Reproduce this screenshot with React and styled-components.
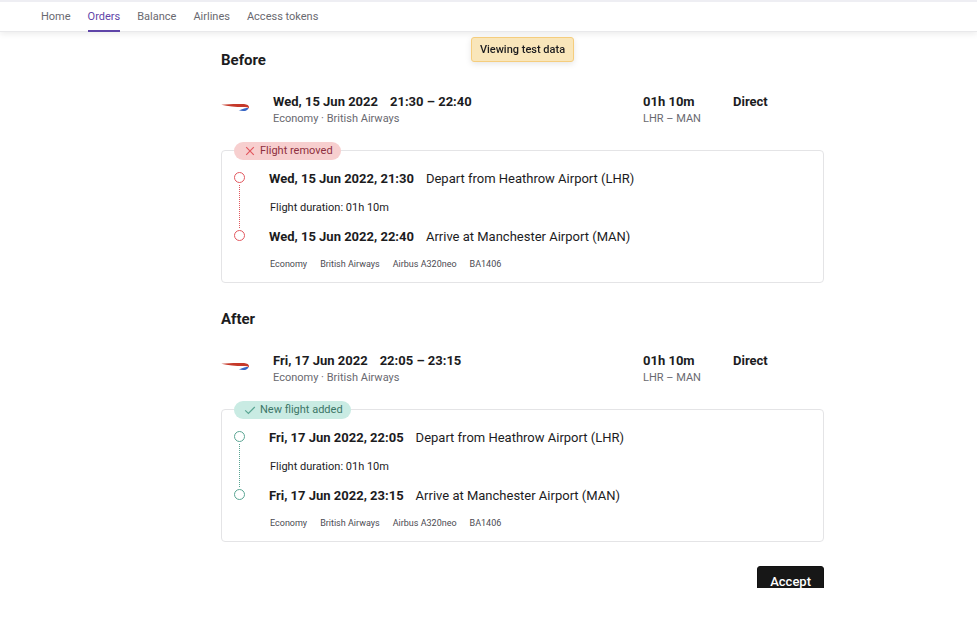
import React from "react";
import styled, { createGlobalStyle } from "styled-components";

const Theme = {
  colors: {
    text: `#1c1c1e`,
    muted: `#696970`,
    purple: `#5f45a8`,
    border: `#e4e4e6`
  },
  fonts: {
    body: `Roboto, "Liberation Sans", sans-serif`
  }
};

const tones = {
  removed: { line: `#e2585f`, text: `#8f2f40`, background: `#f7cfcf` },
  added: { line: `#5aa593`, text: `#3c7566`, background: `#c9ebe3` }
};

const GlobalStyle = createGlobalStyle`
  * {
    box-sizing: border-box;
  }
  body {
    margin: 0;
    background: #fff;
    color: ${Theme.colors.text};
    font-family: ${Theme.fonts.body};
  }
`;

const Navbar = styled.nav`
  display: flex;
  gap: 17px;
  height: 32px;
  padding: 0 41px;
  border-top: 2px solid #eeeef3;
  box-shadow: inset 0 -1px #e9e9eb, 0 2px 6px rgba(0, 0, 0, 0.08);
`;

const NavLink = styled.a`
  padding-top: 2px;
  font-size: 11px;
  line-height: 26px;
  text-decoration: none;
  color: ${({ $active }) =>
    $active ? Theme.colors.purple : Theme.colors.muted};
  border-bottom: 2px solid
    ${({ $active }) => ($active ? Theme.colors.purple : "transparent")};
`;

const ToastArea = styled.div`
  position: fixed;
  top: 37px;
  left: 68px;
  right: 0;
  display: flex;
  justify-content: center;
  pointer-events: none;
`;

const Toast = styled.div`
  padding: 1px 8px 0;
  border: 1px solid #f5cd7d;
  border-radius: 3px;
  background: #f9e6ba;
  box-shadow: 0 2px 6px rgba(0, 0, 0, 0.1);
  font-size: 11px;
  font-weight: 500;
  line-height: 22px;
`;

const Page = styled.main`
  padding: 18px 0 0 68px;
`;

const Content = styled.div`
  max-width: 603px;
  margin: 0 auto;
`;

const Section = styled.section`
  & + & {
    margin-top: 26px;
  }
`;

const Title = styled.h2`
  margin: 0 0 23px;
  font-size: 15px;
  font-weight: 700;
  line-height: 20px;
`;

const Summary = styled.div`
  display: grid;
  grid-template-columns: 52px 1fr 90px 91px;
  margin-bottom: 23px;
`;

const SummaryMain = styled.div`
  display: flex;
  gap: 12px;
  font-size: 13px;
  font-weight: 700;
  line-height: 17px;
`;

const SummarySub = styled.div`
  font-size: 11px;
  line-height: 17px;
  color: ${Theme.colors.muted};
`;

const Card = styled.div`
  position: relative;
  padding: 13px 12px 5px;
  border: 1px solid ${Theme.colors.border};
  border-radius: 4px;
`;

const Badge = styled.div`
  position: absolute;
  top: -9px;
  left: 12px;
  display: flex;
  align-items: center;
  gap: 4px;
  padding: 0 8px 0 10px;
  border-radius: 9px;
  background: ${({ $tone }) => tones[$tone].background};
  color: ${({ $tone }) => tones[$tone].text};
  font-size: 11px;
  line-height: 18px;
`;

const Timeline = styled.div`
  display: flex;
  gap: 24px;
`;

const Rail = styled.div`
  display: flex;
  flex-direction: column;
  align-items: center;
  width: 11px;
  padding: 8px 0 10px;
`;

const Stop = styled.span`
  width: 11px;
  height: 11px;
  border: 1px solid ${({ $tone }) => tones[$tone].line};
  border-radius: 50%;
`;

const Track = styled.span`
  flex: 1;
  margin: 2px 0;
  border-left: 1px dotted ${({ $tone }) => tones[$tone].line};
`;

const StopRow = styled.div`
  display: flex;
  gap: 12px;
  font-size: 13px;
  line-height: 29px;
`;

const Duration = styled.div`
  padding-left: 1px;
  font-size: 11px;
  line-height: 29px;
`;

const Details = styled.ul`
  display: flex;
  gap: 13px;
  margin: 0;
  padding: 0 0 0 36px;
  list-style: none;
  font-size: 9px;
  line-height: 26px;
  color: #4b4b52;
`;

// the button runs under the bottom edge of the panel
const Actions = styled.div`
  display: flex;
  justify-content: flex-end;
  height: 22px;
  margin-top: 24px;
  overflow: hidden;
`;

const Button = styled.button`
  height: 30px;
  padding: 0 12px;
  border: 1px solid #111;
  border-radius: 3px;
  background: #171717;
  color: #fff;
  font-family: inherit;
  font-size: 13px;
  font-weight: 500;
`;

const AirlineLogo = () => (
  <svg width="28" height="28" viewBox="0 0 28 28" aria-hidden="true">
    <path
      d="M0.3 11.8C8 10.9 17 10.7 23 11.1C27 11.5 28.8 13.1 27.6 15.4C26.8 14.2 25 14.1 22 14.1C15 14 7 13.4 0.3 11.8Z"
      fill="#c5392a"
    />
    <path
      d="M17.6 17C21 16.8 22.8 14.8 27.5 14.9C27 18 22 19.2 17.6 17Z"
      fill="#3766c4"
    />
  </svg>
);

const BadgeIcon = ({ tone }) => (
  <svg width="12" height="12" viewBox="0 0 12 12" fill="none" aria-hidden="true">
    <path
      d={tone === "removed" ? "M2.2 2.2L9.8 9.8M9.8 2.2L2.2 9.8" : "M1.2 6.4L4.4 9.4L10.8 3"}
      stroke={tones[tone].line}
      strokeWidth="1.2"
    />
  </svg>
);

const Flight = ({ title, tone, label, date, depart, arrive }) => (
  <Section>
    <Title>{title}</Title>
    <Summary>
      <AirlineLogo />
      <div>
        <SummaryMain>
          <span>{date}</span>
          <span>
            {depart} – {arrive}
          </span>
        </SummaryMain>
        <SummarySub>Economy · British Airways</SummarySub>
      </div>
      <div>
        <SummaryMain>01h 10m</SummaryMain>
        <SummarySub>LHR – MAN</SummarySub>
      </div>
      <SummaryMain>Direct</SummaryMain>
    </Summary>
    <Card>
      <Badge $tone={tone}>
        <BadgeIcon tone={tone} />
        {label}
      </Badge>
      <Timeline>
        <Rail>
          <Stop $tone={tone} />
          <Track $tone={tone} />
          <Stop $tone={tone} />
        </Rail>
        <div>
          <StopRow>
            <b>
              {date}, {depart}
            </b>
            <span>Depart from Heathrow Airport (LHR)</span>
          </StopRow>
          <Duration>Flight duration: 01h 10m</Duration>
          <StopRow>
            <b>
              {date}, {arrive}
            </b>
            <span>Arrive at Manchester Airport (MAN)</span>
          </StopRow>
        </div>
      </Timeline>
      <Details>
        <li>Economy</li>
        <li>British Airways</li>
        <li>Airbus A320neo</li>
        <li>BA1406</li>
      </Details>
    </Card>
  </Section>
);

const links = ["Home", "Orders", "Balance", "Airlines", "Access tokens"];

const App = () => {
  return (
    <>
      <GlobalStyle />
      <Navbar>
        {links.map(link => (
          <NavLink key={link} href="#" $active={link === "Orders"}>
            {link}
          </NavLink>
        ))}
      </Navbar>
      <ToastArea>
        <Toast role="status">Viewing test data</Toast>
      </ToastArea>
      <Page>
        <Content>
          <Flight
            title="Before"
            tone="removed"
            label="Flight removed"
            date="Wed, 15 Jun 2022"
            depart="21:30"
            arrive="22:40"
          />
          <Flight
            title="After"
            tone="added"
            label="New flight added"
            date="Fri, 17 Jun 2022"
            depart="22:05"
            arrive="23:15"
          />
          <Actions>
            <Button type="button">Accept</Button>
          </Actions>
        </Content>
      </Page>
    </>
  );
};

export default App;
